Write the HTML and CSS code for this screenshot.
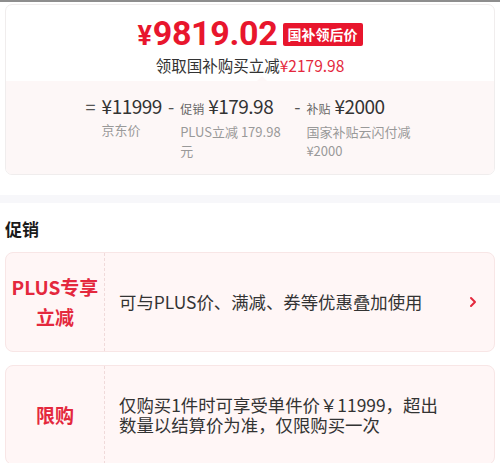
FILE: index.html
```html
<!DOCTYPE html>
<html>
<head>
    <title>促销</title>
    <link rel="stylesheet" href="styles.css">
</head>
<body>
    <div class="topline"></div>
    <div class="price-card">
        <div class="price-head">
            <div class="final-price">
                <span class="final-num"><span class="yen">¥</span>9819.02</span>
                <span class="final-tag">国补领后价</span>
            </div>
            <div class="final-sub">领取国补购买立减<span class="red">¥2179.98</span></div>
        </div>
        <div class="price-calc">
            <div class="calc-item">
                <span class="calc-op">=</span>
                <div class="calc-body">
                    <div class="calc-main"><span class="calc-amount">¥11999</span></div>
                    <div class="calc-desc">京东价</div>
                </div>
            </div>
            <div class="calc-item">
                <span class="calc-op">-</span>
                <div class="calc-body wide">
                    <div class="calc-main"><span class="calc-label">促销</span><span class="calc-amount">¥179.98</span></div>
                    <div class="calc-desc">PLUS立减 179.98 元</div>
                </div>
            </div>
            <div class="calc-item">
                <span class="calc-op">-</span>
                <div class="calc-body wide">
                    <div class="calc-main"><span class="calc-label">补贴</span><span class="calc-amount">¥2000</span></div>
                    <div class="calc-desc">国家补贴云闪付减¥2000</div>
                </div>
            </div>
        </div>
    </div>

    <div class="gap-band"></div>

    <div class="section-title">促销</div>

    <div class="promo-card">
        <div class="promo-name">PLUS专享<br>立减</div>
        <div class="promo-text">可与PLUS价、满减、券等优惠叠加使用</div>
        <svg class="promo-arrow" width="8" height="12" viewBox="0 0 8 12">
            <path d="M2 2 L6 6 L2 10" fill="none" stroke="#e4283d" stroke-width="2" stroke-linecap="round" stroke-linejoin="round"/>
        </svg>
    </div>
    <div class="promo-card">
        <div class="promo-name">限购</div>
        <div class="promo-text">仅购买1件时可享受单件价￥11999，超出数量以结算价为准，仅限购买一次</div>
    </div>
</body>
</html>
```

FILE: styles.css
```css
body {
    margin: 0;
    font-family: "Noto Sans CJK SC", "Noto Sans", sans-serif;
    color: #333;
    background: #fff;
}
.topline {
    height: 2px;
    background: #8e8e8e;
}
.price-card {
    margin: 2px 5px 0;
    border: 1px solid #f0eded;
    border-radius: 7px;
    overflow: hidden;
}
.price-head {
    padding: 9px 0 5px;
    text-align: center;
}
.final-price {
    display: flex;
    justify-content: center;
    align-items: center;
    height: 40px;
}
.final-num {
    font-family: Roboto, "Noto Sans", sans-serif;
    color: #e8162d;
    font-size: 34px;
    font-weight: bold;
    line-height: 40px;
    letter-spacing: -0.3px;
}
.yen {
    font-size: 27px;
    margin-right: 1px;
}
.final-tag {
    margin-left: 5px;
    padding: 0 5px;
    height: 23px;
    line-height: 23px;
    background: #e8162d;
    color: #fff;
    font-size: 14px;
    font-weight: bold;
    border-radius: 2px;
}
.final-sub {
    font-size: 15.5px;
    line-height: 22px;
    color: #333;
}
.red {
    color: #e4283d;
}
.price-calc {
    position: relative;
    display: flex;
    justify-content: center;
    gap: 6px;
    padding: 12px 0 14px;
    background: #fdf7f7;
}
.price-calc::before {
    content: "";
    position: absolute;
    top: -5px;
    left: 251px;
    border: 5px solid transparent;
    border-top: 0;
    border-bottom-color: #fdf7f7;
}
.calc-item {
    display: flex;
}
.calc-op {
    font-size: 18px;
    line-height: 26px;
    color: #555;
    margin-right: 6px;
}
.calc-body.wide {
    width: 108px;
}
.calc-main {
    line-height: 26px;
    white-space: nowrap;
}
.calc-label {
    font-size: 12px;
    color: #666;
    margin-right: 4px;
}
.calc-amount {
    font-size: 19px;
    color: #333;
    letter-spacing: -0.5px;
}
.calc-desc {
    font-size: 13px;
    line-height: 19px;
    color: #999;
}
.gap-band {
    height: 8px;
    margin-top: 20px;
    background: #f7f7fa;
}
.section-title {
    margin: 14px 5px 11px;
    font-size: 17px;
    font-weight: bold;
    line-height: 24px;
    color: #1a1a1a;
}
.promo-card {
    display: flex;
    align-items: center;
    min-height: 98px;
    margin: 0 5px 13px;
    border: 1px solid #f8e6e6;
    border-radius: 8px;
    background: #fff6f6;
}
.promo-name {
    align-self: stretch;
    display: flex;
    align-items: center;
    justify-content: center;
    width: 98px;
    border-right: 1px dashed #f0dada;
    color: #e4283d;
    font-size: 19px;
    font-weight: bold;
    line-height: 30px;
    text-align: center;
}
.promo-text {
    width: 332px;
    padding-left: 14px;
    font-size: 17.4px;
    line-height: 20px;
    color: #333;
}
.promo-arrow {
    margin-left: auto;
    margin-right: 17px;
}
```
